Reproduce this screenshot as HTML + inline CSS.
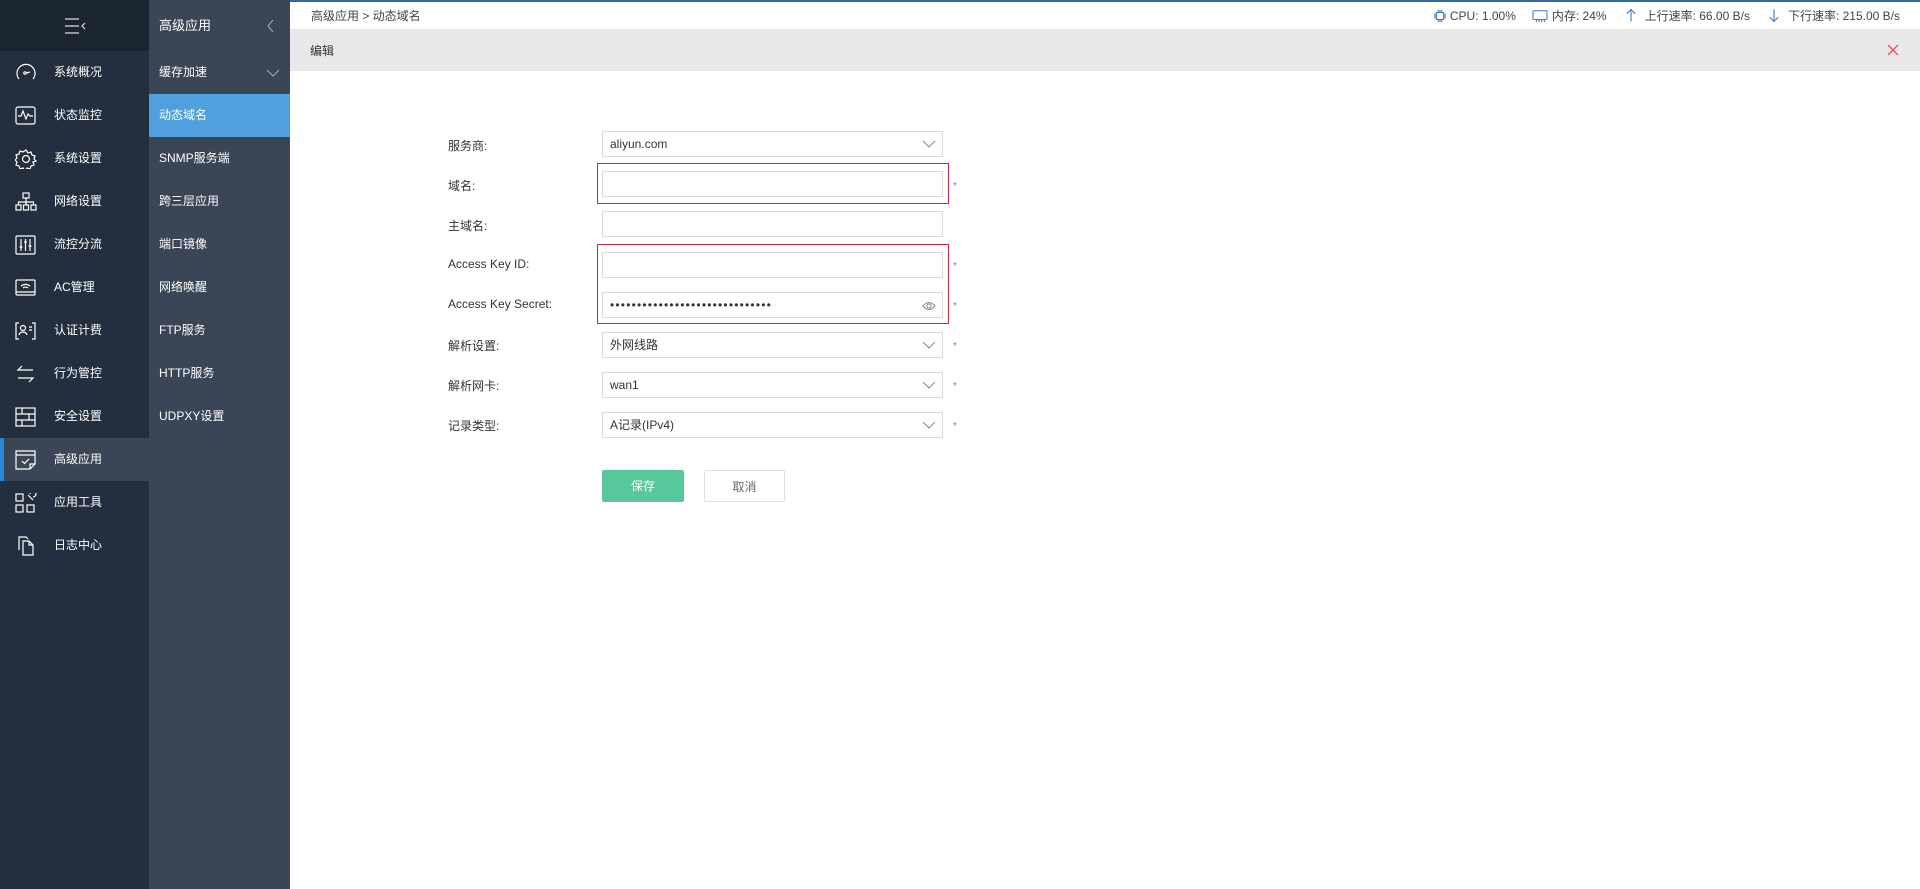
<!DOCTYPE html>
<html><head><meta charset="utf-8">
<style>
*{margin:0;padding:0;box-sizing:border-box}
body{width:1920px;height:889px;overflow:hidden;background:#fff;font-family:"Liberation Sans","Noto Sans CJK SC",sans-serif;font-size:12px;color:#333;position:relative}
.topline{position:absolute;left:0;top:0;width:1920px;height:2px;background:#2e6aa5}
.s1{position:absolute;left:0;top:0;width:149px;height:889px;background:#232f3e}
.s1h{height:51px;background:#1b2431;position:relative}
.item{height:43px;position:relative;color:#fff;font-size:12px;line-height:43px;padding-left:54px}
.item svg{position:absolute;left:15px;top:12px}
.item.act{background:#3a4555}
.item.act:before{content:"";position:absolute;left:0;top:0;width:4px;height:43px;background:#2d86d6}
.s2{position:absolute;left:149px;top:0;width:141px;height:889px;background:#3a4555}
.s2h{height:51px;line-height:52px;color:#fff;font-size:13px;padding-left:10px;position:relative}
.sub{height:43px;line-height:43px;color:#fff;padding-left:10px;position:relative}
.sub.act{background:#4fa0dc}
.crumb{position:absolute;left:311px;top:7px;color:#444;font-size:12px}
.stat{position:absolute;right:16px;top:7px;color:#444;font-size:12px;display:flex;align-items:center}
.stat span{margin-right:4px}
.bar{position:absolute;left:290px;top:29px;width:1630px;height:42px;background:#e8e8e8}
.bar .t{position:absolute;left:20px;top:13px;font-size:12px;color:#333}
.lbl{position:absolute;left:448px;font-size:12px;color:#333}
.inp{position:absolute;left:602px;width:341px;height:26px;border:1px solid #d9d9d9;background:#fff;font-size:12px;line-height:24px;padding-left:7px;color:#333}
.inp svg{position:absolute;right:6px;top:7px}
.star{position:absolute;left:953px;color:#e25a5a;font-size:10px}
.rb{position:absolute;border:1px solid #c8283c}
.btn{position:absolute;top:470px;height:32px;line-height:32px;text-align:center;font-size:12px}
</style></head><body>
<div class="topline"></div>
<div class="s1">
 <div class="s1h"><svg width="24" height="20" style="position:absolute;left:63px;top:16px" viewBox="0 0 24 20"><path d="M2 3h14M2 10h14M2 17h14" stroke="#ddd" stroke-width="1.3"/><path d="M22 7l-3 3 3 3" stroke="#ddd" fill="none" stroke-width="1.2"/></svg></div>
 <div class="item"><svg width="22" height="18" viewBox="0 0 22 18" fill="none" stroke="#fff" stroke-width="1.2"><path d="M4 16A9 9 0 1 1 18 16"/><circle cx="10" cy="10" r="1.2"/><path d="M11 10l4-1"/></svg>系统概况</div>
 <div class="item"><svg width="22" height="20" viewBox="0 0 22 20" fill="none" stroke="#fff" stroke-width="1.2"><rect x="1" y="1" width="19" height="17" rx="2"/><path d="M3 10h3l2-5 3 8 2-5 2 2h3"/></svg>状态监控</div>
 <div class="item"><svg width="22" height="20" viewBox="0 0 22 20" fill="none" stroke="#fff" stroke-width="1.2"><circle cx="11" cy="10" r="3.5"/><path d="M11 1l2 3 3-1 1 3 3 1-1 3 2 2-3 1 1 3-3 1-1 3-3-1-2 3-2-3-3 1-1-3-3-1 1-3-2-2 2-2-1-3 3-1 1-3 3 1z"/></svg>系统设置</div>
 <div class="item"><svg width="22" height="20" viewBox="0 0 22 20" fill="none" stroke="#fff" stroke-width="1.2"><rect x="8" y="1" width="6" height="5"/><rect x="1" y="13" width="5" height="5"/><rect x="8.5" y="13" width="5" height="5"/><rect x="16" y="13" width="5" height="5"/><path d="M11 6v4M3.5 13v-3h15v3M11 10v3"/></svg>网络设置</div>
 <div class="item"><svg width="22" height="20" viewBox="0 0 22 20" fill="none" stroke="#fff" stroke-width="1.2"><rect x="1" y="1" width="19" height="18" rx="1"/><path d="M6 4v12M10.5 4v12M15 4v12M4.5 12h3M9 7h3M13.5 11h3"/></svg>流控分流</div>
 <div class="item"><svg width="22" height="20" viewBox="0 0 22 20" fill="none" stroke="#fff" stroke-width="1.2"><rect x="1" y="2" width="19" height="15" rx="1"/><path d="M1 14h19M6 8a7 7 0 0 1 9 0M8 10a4 4 0 0 1 5 0"/></svg>AC管理</div>
 <div class="item"><svg width="22" height="20" viewBox="0 0 22 20" fill="none" stroke="#fff" stroke-width="1.2"><path d="M4 2H1v16h3M17 2h3v16h-3"/><circle cx="8" cy="7" r="2.5"/><path d="M4 14c1-4 7-4 8 0M14 6h3M14 9h3"/></svg>认证计费</div>
 <div class="item"><svg width="22" height="20" viewBox="0 0 22 20" fill="none" stroke="#fff" stroke-width="1.2"><path d="M18 6H3l4-4M3 14h15l-4 4"/></svg>行为管控</div>
 <div class="item"><svg width="22" height="20" viewBox="0 0 22 20" fill="none" stroke="#fff" stroke-width="1.2"><rect x="1" y="1" width="19" height="18"/><path d="M1 7h19M1 13h19M7 1v6M14 7v6M7 13v6"/></svg>安全设置</div>
 <div class="item act"><svg width="22" height="20" viewBox="0 0 22 20" fill="none" stroke="#fff" stroke-width="1.2"><path d="M20 14V1H1v18h14zM1 5h19M15 19v-5h5M7 11l2.5 2.5L14 9"/></svg>高级应用</div>
 <div class="item"><svg width="22" height="20" viewBox="0 0 22 20" fill="none" stroke="#fff" stroke-width="1.2"><rect x="1" y="1" width="7" height="7"/><rect x="1" y="12" width="7" height="7"/><rect x="12" y="12" width="7" height="7"/><path d="M13 2l5 5M15 1a3 3 0 1 1 3 3"/></svg>应用工具</div>
 <div class="item"><svg width="22" height="20" viewBox="0 0 22 20" fill="none" stroke="#fff" stroke-width="1.2"><path d="M4 14V1h7l2 2M8 5h6l4 4v10H8zM14 5v4h4"/></svg>日志中心</div>
</div>
<div class="s2">
 <div class="s2h">高级应用<svg width="10" height="14" style="position:absolute;right:14px;top:19px" viewBox="0 0 10 14"><path d="M7 1L2 7l5 6" stroke="#aab" fill="none"/></svg></div>
 <div class="sub">缓存加速<svg width="14" height="10" style="position:absolute;right:10px;top:17px" viewBox="0 0 14 10"><path d="M1 2l6 6 6-6" stroke="#aab" fill="none"/></svg></div>
 <div class="sub act">动态域名</div>
 <div class="sub">SNMP服务端</div>
 <div class="sub">跨三层应用</div>
 <div class="sub">端口镜像</div>
 <div class="sub">网络唤醒</div>
 <div class="sub">FTP服务</div>
 <div class="sub">HTTP服务</div>
 <div class="sub">UDPXY设置</div>
</div>
<div class="crumb">高级应用 &gt; 动态域名</div>
<div class="stat">
 <svg width="14" height="14" viewBox="0 0 16 16" fill="none" stroke="#3a7fc0" stroke-width="1.2" style="margin-right:3px"><rect x="4" y="4" width="8" height="8"/><path d="M1 6h3M1 8h3M1 10h3M12 6h3M12 8h3M12 10h3M6 1v3M8 1v3M10 1v3M6 12v3M8 12v3M10 12v3"/></svg><span>CPU: 1.00%</span>
 <svg width="16" height="14" viewBox="0 0 18 16" fill="none" stroke="#3a7fc0" stroke-width="1.2" style="margin:0 4px 0 12px"><rect x="1" y="2" width="16" height="10" rx="1"/><path d="M5 12v3M8 12v3M11 12v3M14 12v3"/></svg><span>内存: 24%</span>
 <svg width="12" height="15" viewBox="0 0 14 16" fill="none" stroke="#3a7fc0" stroke-width="1.3" style="margin:0 8px 0 14px"><path d="M7 15V1M2 6l5-5 5 5"/></svg><span>上行速率: 66.00 B/s</span>
 <svg width="12" height="15" viewBox="0 0 14 16" fill="none" stroke="#3a7fc0" stroke-width="1.3" style="margin:0 8px 0 14px"><path d="M7 1v14M2 10l5 5 5-5"/></svg><span>下行速率: 215.00 B/s</span>
</div>
<div class="bar"><div class="t">编辑</div><svg width="12" height="12" viewBox="0 0 12 12" style="position:absolute;right:21px;top:15px"><path d="M1 1l10 10M11 1L1 11" stroke="#e55" stroke-width="1.4"/></svg></div>

<div class="lbl" style="top:137px">服务商:</div>
<div class="inp" style="top:131px">aliyun.com<svg width="14" height="10" viewBox="0 0 14 10"><path d="M1 2l6 6 6-6" stroke="#888" fill="none"/></svg></div>

<div class="rb" style="left:597px;top:163px;width:352px;height:41px"></div>
<div class="lbl" style="top:177px">域名:</div>
<div class="inp" style="top:171px"></div>
<div class="star" style="top:181px">*</div>

<div class="lbl" style="top:217px">主域名:</div>
<div class="inp" style="top:211px"></div>

<div class="rb" style="left:597px;top:244px;width:352px;height:80px"></div>
<div class="lbl" style="top:257px">Access Key ID:</div>
<div class="inp" style="top:252px"></div>
<div class="star" style="top:261px">*</div>

<div class="lbl" style="top:297px">Access Key Secret:</div>
<div class="inp" style="top:292px;letter-spacing:1.2px">••••••••••••••••••••••••••••••<svg width="14" height="10" viewBox="0 0 14 10" style="top:8px"><path d="M1 5q6-7 12 0q-6 7-12 0z" stroke="#888" fill="none"/><circle cx="7" cy="5" r="2" stroke="#888" fill="none"/></svg></div>
<div class="star" style="top:301px">*</div>

<div class="lbl" style="top:337px">解析设置:</div>
<div class="inp" style="top:332px">外网线路<svg width="14" height="10" viewBox="0 0 14 10"><path d="M1 2l6 6 6-6" stroke="#888" fill="none"/></svg></div>
<div class="star" style="top:341px">*</div>

<div class="lbl" style="top:377px">解析网卡:</div>
<div class="inp" style="top:372px">wan1<svg width="14" height="10" viewBox="0 0 14 10"><path d="M1 2l6 6 6-6" stroke="#888" fill="none"/></svg></div>
<div class="star" style="top:381px">*</div>

<div class="lbl" style="top:417px">记录类型:</div>
<div class="inp" style="top:412px">A记录(IPv4)<svg width="14" height="10" viewBox="0 0 14 10"><path d="M1 2l6 6 6-6" stroke="#888" fill="none"/></svg></div>
<div class="star" style="top:421px">*</div>

<div class="btn" style="left:602px;width:82px;background:#57c89c;color:#fff;border-radius:2px">保存</div>
<div class="btn" style="left:704px;width:81px;border:1px solid #ddd;color:#666;border-radius:2px">取消</div>
</body></html>
